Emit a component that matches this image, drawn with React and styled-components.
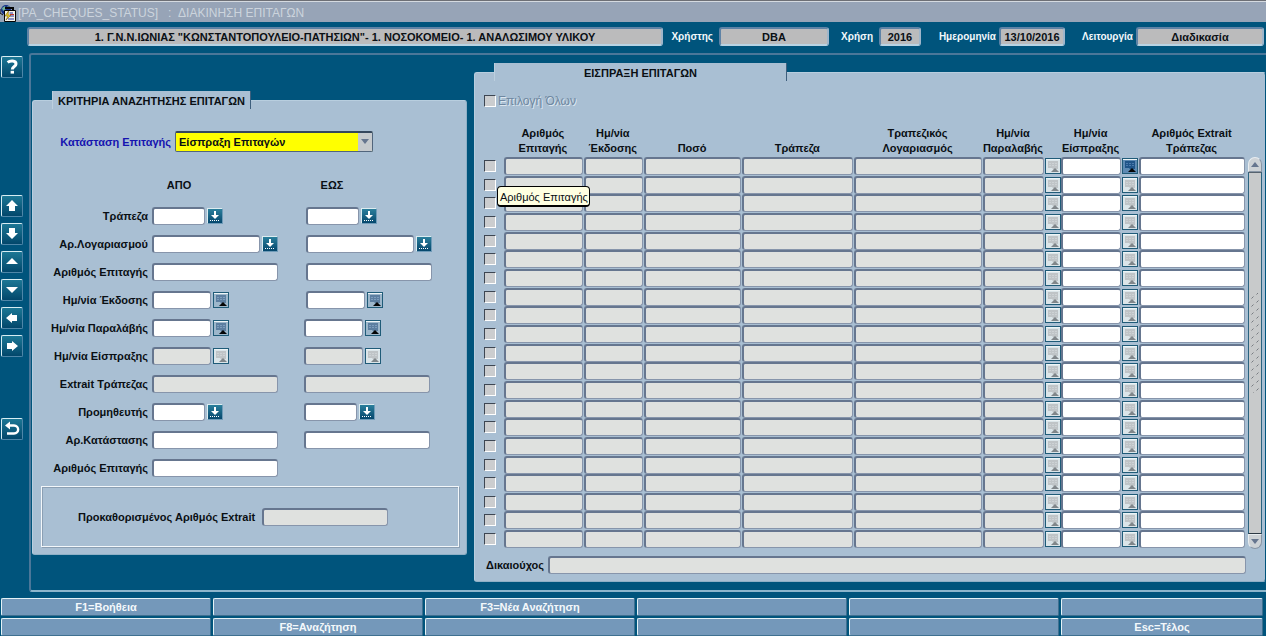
import React, { useState } from 'react';
import styled, { createGlobalStyle, css } from 'styled-components';

const GlobalStyle = createGlobalStyle`
  * {
    box-sizing: border-box;
  }

  body {
    margin: 0;
    background: #00547c;
  }

  body, input, select, button {
    font-family: "Liberation Sans", Arial, sans-serif;
    font-size: 11px;
    font-weight: bold;
    color: #0a0f14;
  }
`;

const Page = styled.div`
  min-height: 100vh;
  display: flex;
  flex-direction: column;
  background: #00547c;
`;

const TitleBar = styled.header`
  height: 22px;
  flex: none;
  display: flex;
  align-items: center;
  gap: 2px;
  padding-top: 2px;
  background: #97a4b7;
  border-top: 1px solid #6d6f75;
  box-shadow: inset 0 1px 0 #d5dae0;
`;

const WindowTitle = styled.h1`
  margin: 0;
  font-size: 12px;
  font-weight: normal;
  color: #ccd4dd;
  white-space: pre;
`;

const InfoBar = styled.div`
  display: flex;
  align-items: center;
  height: 31px;
  padding: 0 2px 2px 27px;
`;

const InfoLabel = styled.label`
  width: ${({ $width }) => $width}px;
  padding-right: ${({ $gap }) => $gap}px;
  text-align: right;
  font-size: 10px;
  color: #f2f8fb;
  white-space: nowrap;
`;

const InfoField = styled.input`
  width: ${({ $width }) => ($width ? `${$width}px` : 'auto')};
  flex: ${({ $width }) => ($width ? 'none' : '1')};
  min-width: 0;
  height: 19px;
  padding: 0;
  text-align: center;
  background: #bbbbbc;
  border: 2px solid #5f83a6;
  border-right-color: #9fb6cb;
  border-bottom-color: #b9d3e3;
  border-radius: 3px;
  outline: none;
`;

const Workspace = styled.div`
  flex: 1;
  display: flex;
`;

const Sidebar = styled.nav`
  width: 29px;
  flex: none;
  display: flex;
  flex-direction: column;
  padding: 3px 0 0 1px;
`;

const SideGroup = styled.div`
  display: flex;
  flex-direction: column;
  gap: 6px;
  margin-bottom: ${({ $after }) => $after}px;
`;

const SideButton = styled.button`
  width: 22px;
  height: 22px;
  padding: 0;
  display: flex;
  align-items: center;
  justify-content: center;
  background: linear-gradient(#1c7795, #02476b);
  border: 1px solid #d7edf3;
  border-right-color: #4e86a8;
  border-bottom-color: #4e86a8;
  border-radius: 2px;
`;

const Frame = styled.main`
  flex: 1;
  min-width: 0;
  display: flex;
  align-items: flex-start;
  gap: 7px;
  padding: 8px 0 8px 1px;
  border: 2px solid #4b7799;
  border-right: 0;
  border-bottom-color: #8db6cc;
  border-radius: 3px 0 0 3px;
`;

const CriteriaColumn = styled.section`
  width: 435px;
  flex: none;
  display: flex;
  flex-direction: column;
  margin-top: 28px;
`;

const ResultsColumn = styled.section`
  flex: 1;
  min-width: 0;
  display: flex;
  flex-direction: column;
`;

/* the tab overlaps the top edge of its panel */
const Tab = styled.h2`
  z-index: 1;
  width: ${({ $width }) => $width}px;
  height: 18px;
  margin: 0 0 -9px 20px;
  font-size: 11px;
  line-height: 20px;
  text-align: center;
  background: #a9bfd3;
  border-left: 1px solid #bccfde;
  border-right: 1px solid #3e5f7d;
`;

const Panel = styled.div`
  background: #a9bfd3;
  border: 1px solid #b8cedf;
  border-color: #b8cedf #8fb0c6 #8fb0c6 #b8cedf;
  border-radius: 3px;
`;

const CriteriaPanel = styled(Panel)`
  padding: 30px 7px 7px 8px;
`;

const ResultsPanel = styled(Panel)`
  padding: 21px 3px 7px 9px;
  border-right: 1px solid #00547c;
`;

const StatusRow = styled.div`
  display: flex;
  align-items: center;
  margin-bottom: 26px;
`;

const StatusLabel = styled.label`
  width: 134px;
  padding-right: 4px;
  text-align: right;
  color: #1513b0;
  white-space: nowrap;
`;

const SelectBox = styled.div`
  position: relative;
  width: 198px;
`;

const StatusSelect = styled.select`
  appearance: none;
  display: block;
  width: 100%;
  height: 21px;
  padding: 0 18px 0 3px;
  background: #ffff00;
  border: 1px solid #51657c;
  border-top: 2px solid #35475c;
  border-radius: 2px;
  outline: none;
`;

const SelectArrow = styled.span`
  position: absolute;
  top: 2px;
  right: 1px;
  bottom: 1px;
  width: 14px;
  display: flex;
  align-items: center;
  justify-content: center;
  background: #c6cacd;
  pointer-events: none;
`;

const RangeHeads = styled.div`
  display: flex;
  padding-left: 112px;
  margin-bottom: 10px;
  line-height: 14px;
`;

const RangeHead = styled.span`
  width: 53px;
  margin-right: 101px;
  text-align: center;
`;

const CriteriaRow = styled.div`
  display: grid;
  grid-template-columns: 107px ${({ $narrow }) => ($narrow ? 152 : 154)}px 1fr;
  align-items: center;
  height: 28px;
`;

const FieldLabel = styled.label`
  text-align: right;
  white-space: nowrap;
`;

const RangeCell = styled.div`
  display: flex;
  align-items: center;
  gap: 2px;
  padding-left: 4px;
`;

const fieldStyle = css`
  min-width: 0;
  height: 18px;
  padding: 0 3px;
  background: ${({ disabled, readOnly }) => (disabled || readOnly ? '#dfe1df' : '#ffffff')};
  border: 1px solid #8795ab;
  border-top: 2px solid #66768f;
  border-left: 2px solid #66768f;
  border-radius: 3px;
  outline: none;
`;

const Field = styled.input`
  ${fieldStyle}
  width: ${({ $width }) => $width}px;
`;

const buttonFill = {
  list: 'linear-gradient(#2b7f9c, #05476d)',
  date: '#9db7cb',
  on: '#5d8ab3',
  off: '#dbe5e9'
};

const IconButton = styled.button`
  width: 16px;
  height: 16px;
  flex: none;
  padding: 0;
  display: flex;
  align-items: center;
  justify-content: center;
  background: ${({ $look }) => buttonFill[$look]};
  border: 1px solid #1f5b78;

  ${({ $look }) =>
    $look === 'list' &&
    css`
      border-color: #dcecf0 #6f9bb8 #6f9bb8 #dcecf0;
    `}
`;

const DefaultBox = styled.div`
  display: flex;
  align-items: center;
  height: 61px;
  margin-top: 4px;
  padding-left: 36px;
  gap: 7px;
  border: 1px solid #f3f7fa;
  box-shadow: inset 1px 1px 0 #8b9fb3, 1px 1px 0 #8b9fb3;
`;

const CheckBox = styled.input.attrs({ type: 'checkbox' })`
  appearance: none;
  display: block;
  width: 12px;
  height: 12px;
  margin: 0;
  background: #cbcdcf;
  border: 1px solid #ffffff;
  border-top-color: #3d4652;
  border-left-color: #3d4652;

  &:checked {
    background: #41566e;
  }
`;

const SelectAll = styled.label`
  display: flex;
  align-items: center;
  gap: 2px;
  height: 14px;
  margin-bottom: 18px;
  font-size: 12px;
  font-weight: normal;
  color: #6f87a0;
  text-shadow: 1px 1px 0 #dde7ef;
`;

const TableArea = styled.div`
  position: relative;
  display: flex;
  gap: 2px;
`;

const ChequeTable = styled.table`
  flex: 1;
  min-width: 0;
  height: 423px;
  table-layout: fixed;
  border-collapse: collapse;

  th {
    height: 31px;
    padding: 0 2px 1px 0;
    vertical-align: bottom;
    line-height: 15px;
    white-space: pre;
  }

  td {
    padding: 0;
    vertical-align: top;
  }
`;

const CellField = styled.input`
  ${fieldStyle}
  display: block;
  width: calc(100% - 1px);
`;

const CellPad = styled.div`
  padding-top: ${({ $top }) => $top}px;
`;

const ScrollBar = styled.div`
  width: 14px;
  flex: none;
  display: flex;
  flex-direction: column;
  margin-top: 31px;
`;

const ScrollButton = styled.button`
  height: 15px;
  padding: 0;
  display: flex;
  align-items: center;
  justify-content: center;
  background: #cdd2d6;
  border: 1px solid #e8edf0;
  border-radius: ${({ $end }) => ($end ? '0 0 7px 7px' : '7px 7px 0 0')};
  border-right-color: #8795a5;
  border-bottom-color: #8795a5;
`;

const ScrollThumb = styled.div`
  flex: 1;
  display: flex;
  align-items: center;
  justify-content: center;
  padding-bottom: 20px;
  background: #c8cacb;
  border: 1px solid #2a6380;
  border-top-color: #56636f;
  border-bottom-color: #2c3944;
`;

const Tooltip = styled.div`
  position: absolute;
  left: 13px;
  top: 60px;
  z-index: 2;
  height: 21px;
  padding: 0 1px 0 2px;
  line-height: 20px;
  font-weight: normal;
  white-space: nowrap;
  background: #ffffe1;
  border: 1px solid #000000;
  border-bottom-width: 2px;
  border-radius: 4px;
`;

const PayeeRow = styled.div`
  display: flex;
  align-items: center;
  gap: 4px;
  margin-top: 7px;
  padding: 0 16px 0 2px;
`;

const PayeeField = styled.input`
  ${fieldStyle}
  flex: 1;
`;

const KeyGrid = styled.footer`
  display: grid;
  grid-template-columns: repeat(5, 210fr) 202fr;
  gap: 2px;
  padding: 6px 3px 0 1px;
`;

const KeyButton = styled.button`
  height: 18px;
  padding: 0;
  color: #f4f8fb;
  background: #7498ba;
  border: 1px solid #3f7090;
  border-top-color: #e4f2f6;
  border-left-color: #e4f2f6;
  border-radius: 2px;
`;

const criteria = [
  { id: 'bank', label: 'Τράπεζα', width: 53, button: 'list' },
  { id: 'account', label: 'Αρ.Λογαριασμού', width: 108, button: 'list' },
  { id: 'cheque', label: 'Αριθμός Επιταγής', width: 126 },
  { id: 'issued', label: 'Ημ/νία Έκδοσης', width: 59, button: 'date' },
  { id: 'received', label: 'Ημ/νία Παραλάβής', width: 59, button: 'date', narrow: true },
  { id: 'collected', label: 'Ημ/νία Είσπραξης', width: 59, button: 'off', narrow: true, disabled: true },
  { id: 'extrait', label: 'Extrait Τράπεζας', width: 126, narrow: true, disabled: true },
  { id: 'supplier', label: 'Προμηθευτής', width: 53, button: 'list', narrow: true },
  { id: 'statement', label: 'Αρ.Κατάστασης', width: 126, narrow: true },
  { id: 'chequeNo', label: 'Αριθμός Επιταγής', width: 126, single: true }
];

const columns = [
  { title: '', width: 20, kind: 'check' },
  { title: 'Αριθμός\nΕπιταγής', width: 80 },
  { title: 'Ημ/νία\nΈκδοσης', width: 60 },
  { title: 'Ποσό', width: 99 },
  { title: 'Τράπεζα', width: 112 },
  { title: 'Τραπεζικός\nΛογαριασμός', width: 129 },
  { title: 'Ημ/νία\nΠαραλαβής', width: 61 },
  { title: '', width: 16, kind: 'date' },
  { title: 'Ημ/νία\nΕίσπραξης', width: 61, kind: 'edit' },
  { title: '', width: 17, kind: 'date', active: true },
  { title: 'Αριθμός Extrait\nΤράπεζας', width: 107, kind: 'edit' }
];

const rows = Array.from({ length: 21 }, (_, i) => i);

const keys = [
  'F1=Βοήθεια', '', 'F3=Νέα Αναζήτηση', '', '', '',
  '', 'F8=Αναζήτηση', '', '', '', 'Esc=Τέλος'
];

const Col = styled.col`
  width: ${({ $width }) => $width}px;
`;

const sidePaths = {
  up: 'M6 0L12 6H9V11H3V6H0Z',
  down: 'M3 0H9V5H12L6 11L0 5H3Z',
  pageUp: 'M6 2L12 8H0Z',
  pageDown: 'M0 3H12L6 9Z',
  left: 'M0 6L6 1V3H11V9H6V11Z',
  right: 'M12 6L6 1V3H1V9H6V11Z'
};

const SideIcon = ({ name }) => {
  if (name === 'help') {
    return (
      <svg width="16" height="18" viewBox="0 0 16 18" fill="none">
        <path d="M3.6 4.4C6 2.6 12 2.2 12 6C12 8.6 8.3 8.4 8.3 11.4" stroke="#fff" strokeWidth="3" />
        <path d="M6.6 12.8h3.4v2.8H6.6z" fill="#fff" />
      </svg>
    );
  }
  if (name === 'back') {
    return (
      <svg width="16" height="16" viewBox="0 0 16 16" fill="none">
        <path d="M3 4.5H10C15.5 4.5 15.5 12.5 10 12.5H3" stroke="#fff" strokeWidth="2.4" />
        <path d="M1 4.5L6 0.5V8.5Z" fill="#fff" />
      </svg>
    );
  }
  return (
    <svg width="12" height="12" viewBox="0 0 12 12">
      <path d={sidePaths[name]} fill="#fff" />
    </svg>
  );
};

const ListIcon = () => (
  <svg width="14" height="14" viewBox="0 0 14 14">
    <path d="M6 2H8V6H11L7 10L3 6H6Z" fill="#fff" />
    <path d="M2 11.5H12" stroke="#fff" strokeDasharray="1 1" />
  </svg>
);

const dateColors = {
  date: ['#5c7ea0', '#7d9dbd', '#050505'],
  on: ['#1f5488', '#4a7aad', '#050505'],
  off: ['#bfc4c7', '#cdd2d5', '#80868a']
};

const DateIcon = ({ look }) => {
  const [grid, dots, corner] = dateColors[look];
  return (
    <svg width="14" height="14" viewBox="0 0 14 14">
      <path d="M0 0.5H14" stroke="#eef5f7" />
      <path d="M2 2H12V10H10L8 11L6 9H2Z" fill={grid} />
      <path d="M3 4.5H11M3 6.5H11" stroke={dots} strokeDasharray="2 1" />
      <path d="M5 13L9 9L13 13Z" fill={corner} />
    </svg>
  );
};

const AppIcon = () => (
  <svg width="16" height="18" viewBox="0 0 16 18">
    <circle cx="6" cy="6" r="5" fill="#15308a" />
    <path d="M2 4L5 2L6 5L3 7ZM7 2L10 3L9 5Z" fill="#6fb39b" />
    <path d="M0 5V9L3 11" stroke="#0b0c10" fill="none" />
    <path d="M4.5 6.5H15.5V17.5H4.5Z" fill="#f5f2e8" stroke="#050505" />
    <path d="M5 4H13V7" stroke="#050505" strokeWidth="2" fill="none" />
    <path d="M9.5 9H13M9.5 12H14M8 15H14" stroke="#2230a0" />
    <path d="M10 10.5H14" stroke="#c8352c" />
    <path d="M8.5 7L5 12H8L6 16L11 11H8Z" fill="#f6dc24" stroke="#7a5c10" strokeWidth="0.6" />
  </svg>
);

const Arrow = ({ up }) => (
  <svg width="8" height="6" viewBox="0 0 8 6">
    <path d={up ? 'M4 0L8 5H0Z' : 'M0 0H8L4 5Z'} fill="#66768f" />
  </svg>
);

const Grip = () => (
  <svg width="8" height="100" viewBox="0 0 8 100">
    {Array.from({ length: 13 }, (_, i) => (
      <path key={i} d={`M0.5 ${i * 8 + 5.5}l2 -2M5.5 ${i * 8 + 1.5}l2 -2`} stroke="#777b80" />
    ))}
  </svg>
);

const RowButton = ({ look, label }) => (
  <IconButton type="button" $look={look} aria-label={label} disabled={look === 'off'}>
    {look === 'list' ? <ListIcon /> : <DateIcon look={look} />}
  </IconButton>
);

const CriteriaField = ({ item, side }) => {
  const id = `${item.id}-${side}`;
  return (
    <RangeCell>
      <Field
        id={id}
        $width={item.width}
        disabled={item.disabled}
        aria-label={side === 'to' ? `${item.label} έως` : undefined}
      />
      {item.button && <RowButton look={item.button} label={`Επιλογή ${item.label}`} />}
    </RangeCell>
  );
};

const Cell = ({ column, row }) => {
  if (column.kind === 'check') {
    return (
      <CellPad $top={3}>
        <CheckBox aria-label={`Γραμμή ${row + 1}`} />
      </CellPad>
    );
  }
  if (column.kind === 'date') {
    return (
      <CellPad $top={1}>
        <RowButton look={column.active && row === 0 ? 'on' : 'off'} label={`Ημερολόγιο ${row + 1}`} />
      </CellPad>
    );
  }
  return (
    <CellField
      readOnly={column.kind !== 'edit'}
      aria-label={`${column.title.replace('\n', ' ')} ${row + 1}`}
    />
  );
};

const App = () => {
  const [status, setStatus] = useState('collect');

  return (
    <Page>
      <GlobalStyle />
      <TitleBar>
        <AppIcon />
        <WindowTitle>{'[PA_CHEQUES_STATUS]   :  ΔΙΑΚΙΝΗΣΗ ΕΠΙΤΑΓΩΝ'}</WindowTitle>
      </TitleBar>

      <InfoBar>
        <InfoField
          readOnly
          aria-label="Μονάδα"
          value={'1. Γ.Ν.Ν.ΙΩΝΙΑΣ "ΚΩΝΣΤΑΝΤΟΠΟΥΛΕΙΟ-ΠΑΤΗΣΙΩΝ"- 1. ΝΟΣΟΚΟΜΕΙΟ- 1. ΑΝΑΛΩΣΙΜΟΥ ΥΛΙΚΟΥ'}
        />
        <InfoLabel htmlFor="user" $width={56} $gap={6}>Χρήστης</InfoLabel>
        <InfoField id="user" $width={110} readOnly value="DBA" />
        <InfoLabel htmlFor="year" $width={50} $gap={6}>Χρήση</InfoLabel>
        <InfoField id="year" $width={42} readOnly value="2016" />
        <InfoLabel htmlFor="date" $width={78} $gap={3}>Ημερομηνία</InfoLabel>
        <InfoField id="date" $width={66} readOnly value="13/10/2016" />
        <InfoLabel htmlFor="mode" $width={71} $gap={3}>Λειτουργία</InfoLabel>
        <InfoField id="mode" $width={128} readOnly value="Διαδικασία" />
      </InfoBar>

      <Workspace>
        <Sidebar>
          <SideGroup $after={117}>
            <SideButton aria-label="Βοήθεια"><SideIcon name="help" /></SideButton>
          </SideGroup>
          <SideGroup $after={61}>
            {Object.keys(sidePaths).map((name) => (
              <SideButton key={name} aria-label={name}><SideIcon name={name} /></SideButton>
            ))}
          </SideGroup>
          <SideButton aria-label="Επιστροφή"><SideIcon name="back" /></SideButton>
        </Sidebar>

        <Frame>
          <CriteriaColumn>
            <Tab $width={199}>ΚΡΙΤΗΡΙΑ ΑΝΑΖΗΤΗΣΗΣ ΕΠΙΤΑΓΩΝ</Tab>
            <CriteriaPanel>
              <StatusRow>
                <StatusLabel htmlFor="status">Κατάσταση Επιταγής</StatusLabel>
                <SelectBox>
                  <StatusSelect id="status" value={status} onChange={(e) => setStatus(e.target.value)}>
                    <option value="collect">Είσπραξη Επιταγών</option>
                  </StatusSelect>
                  <SelectArrow><Arrow /></SelectArrow>
                </SelectBox>
              </StatusRow>

              <RangeHeads>
                <RangeHead>ΑΠΟ</RangeHead>
                <RangeHead>ΕΩΣ</RangeHead>
              </RangeHeads>

              {criteria.map((item) => (
                <CriteriaRow key={item.id} $narrow={item.narrow}>
                  <FieldLabel htmlFor={`${item.id}-from`}>{item.label}</FieldLabel>
                  <CriteriaField item={item} side="from" />
                  {!item.single && <CriteriaField item={item} side="to" />}
                </CriteriaRow>
              ))}

              <DefaultBox>
                <FieldLabel htmlFor="defaultExtrait">Προκαθορισμένος Αριθμός Extrait</FieldLabel>
                <Field id="defaultExtrait" $width={126} disabled />
              </DefaultBox>
            </CriteriaPanel>
          </CriteriaColumn>

          <ResultsColumn>
            <Tab $width={293}>ΕΙΣΠΡΑΞΗ ΕΠΙΤΑΓΩΝ</Tab>
            <ResultsPanel>
              <SelectAll>
                <CheckBox disabled />
                Επιλογή Όλων
              </SelectAll>

              <TableArea>
                <ChequeTable>
                  <colgroup>
                    {columns.map((column, i) => (
                      <Col key={i} $width={column.width} />
                    ))}
                  </colgroup>
                  <thead>
                    <tr>
                      {columns.map((column, i) => (
                        <th key={i} scope="col">{column.title}</th>
                      ))}
                    </tr>
                  </thead>
                  <tbody>
                    {rows.map((row) => (
                      <tr key={row}>
                        {columns.map((column, i) => (
                          <td key={i}><Cell column={column} row={row} /></td>
                        ))}
                      </tr>
                    ))}
                  </tbody>
                </ChequeTable>
                <ScrollBar>
                  <ScrollButton aria-label="Πάνω"><Arrow up /></ScrollButton>
                  <ScrollThumb><Grip /></ScrollThumb>
                  <ScrollButton $end aria-label="Κάτω"><Arrow /></ScrollButton>
                </ScrollBar>
                <Tooltip role="tooltip">Αριθμός Επιταγής</Tooltip>
              </TableArea>

              <PayeeRow>
                <FieldLabel htmlFor="payee">Δικαιούχος</FieldLabel>
                <PayeeField id="payee" readOnly />
              </PayeeRow>
            </ResultsPanel>
          </ResultsColumn>
        </Frame>
      </Workspace>

      <KeyGrid>
        {keys.map((key, i) => (
          <KeyButton key={i} type="button">{key}</KeyButton>
        ))}
      </KeyGrid>
    </Page>
  );
};

export default App;
